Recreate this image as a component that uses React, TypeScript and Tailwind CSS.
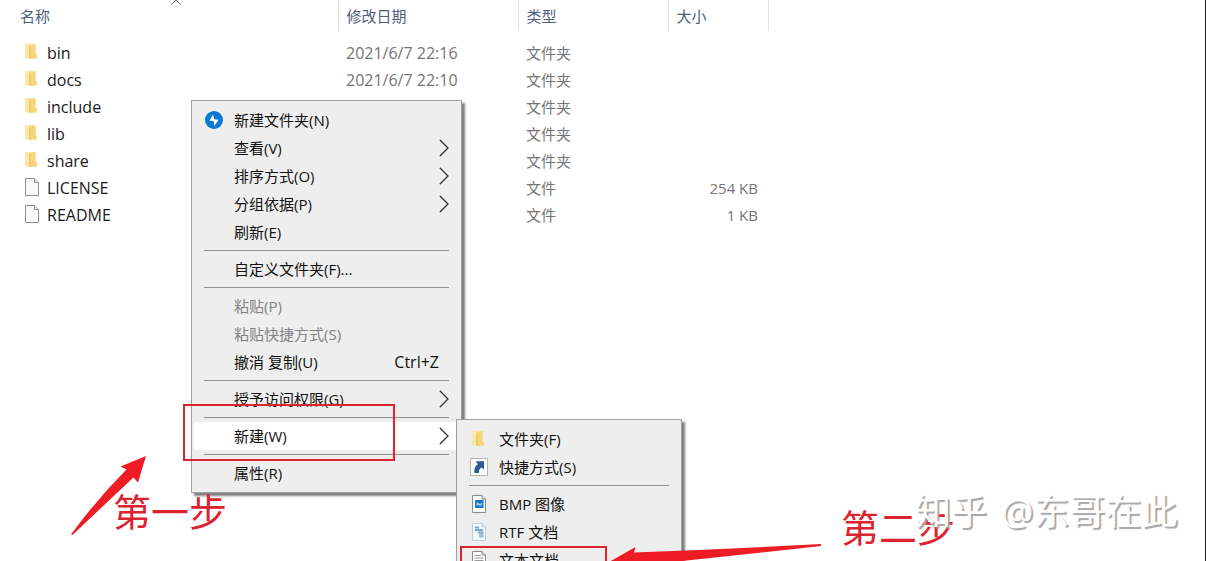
import { Fragment } from "react";
import type { ReactNode } from "react";

// ── Types ───────────────────────────────────────────────────────────────────

interface FileEntry {
  name: string;
  kind: "folder" | "file";
  date?: string;
  size?: string;
}

interface MenuItem {
  label: string;
  icon?: ReactNode;
  shortcut?: string;
  submenu?: boolean;
  disabled?: boolean;
  active?: boolean;
}

// ── Icons ───────────────────────────────────────────────────────────────────

function FolderIcon() {
  return (
    <svg width="16" height="20" viewBox="0 0 16 20" className="shrink-0">
      <path d="M1 2h10.500v14H1z" fill="#fbe29a" />
      <path d="M1 2h4v15l-4-1.500z" fill="#fce7a8" />
      <path d="M5 4l6.500-2v9.500l1.500 1.500v3.500L5 17z" fill="#f6d67c" />
      <path d="M5 4l1.500-.5v13L5 17z" fill="#efc864" />
    </svg>
  );
}

function FileIcon() {
  return (
    <svg width="16" height="20" viewBox="0 0 16 20" className="shrink-0">
      <path d="M1.500 1.500h9L14.500 5.500v13h-13z" fill="#fafafa" stroke="#8e8e8e" />
      <path d="M10.500 1.500v4h4" fill="#e8e8e8" stroke="#8e8e8e" />
    </svg>
  );
}

function FlashIcon() {
  return (
    <svg width="18" height="18" viewBox="0 0 18 18">
      <circle cx="9" cy="9" r="9" fill="#0b78d4" />
      <path d="M8 3.500L4.500 9.800l4 .2.900 5L13.500 8.700l-4.200-.4z" fill="#fff" />
    </svg>
  );
}

function ShortcutIcon() {
  return (
    <svg width="18" height="18" viewBox="0 0 18 18">
      <path d="M.5.5h17v17H.5z" fill="#fff" stroke="#b4b4b4" />
      <path d="M5.500 3.500L14 3v8.500l-2.300-2C9.500 10.800 8.700 12.500 9 15H4.500C3.800 11 5 8.200 7.800 6z" fill="#2c5a94" />
    </svg>
  );
}

function BitmapIcon() {
  return (
    <svg width="16" height="20" viewBox="0 0 16 20">
      <path d="M1.500 1.500H11L14.500 5v13.500h-13z" fill="#fff" stroke="#8a8a8a" />
      <path d="M11 1.500V5h3.500" fill="#ddd" stroke="#8a8a8a" />
      <path d="M4 6h8.500v8H4z" fill="#1478cc" />
      <path d="M5.500 8l2 1 1.500 1 2-1.500v3H5.500z" fill="#8fd0f5" />
    </svg>
  );
}

function RichTextIcon() {
  return (
    <svg width="16" height="20" viewBox="0 0 16 20">
      <path d="M1.500 1.500H11L14.500 5v13.500h-13z" fill="#f3f8fc" stroke="#c3cdd6" />
      <path d="M11 1.500V5h3.500" fill="#dde6ee" stroke="#c3cdd6" />
      <path d="M4 5.500h4M4 8h8M7 10.500h5.500" stroke="#7fa6c9" strokeWidth="2" />
      <path d="M8 11h4.500v4.500H8z" fill="#9dbedb" />
    </svg>
  );
}

function TextIcon() {
  return (
    <svg width="16" height="20" viewBox="0 0 16 20">
      <path d="M1.500 1.500H11L14.500 5v13.500h-13z" fill="#fff" stroke="#8a8a8a" />
      <path d="M11 1.500V5h3.500" fill="#ddd" stroke="#8a8a8a" />
      <path d="M3.500 5.500H10M3.500 8h9M3.500 10.500h9M3.500 13h9M3.500 15.500h9" stroke="#9a9a9a" />
    </svg>
  );
}

function Chevron() {
  return (
    <svg width="10" height="18" viewBox="0 0 10 18" className="shrink-0">
      <path d="M.8.8L9 9 .8 17.200" fill="none" stroke="#333" strokeWidth="1.300" />
    </svg>
  );
}

// ── Data ────────────────────────────────────────────────────────────────────

const files: FileEntry[] = [
  { name: "bin", kind: "folder", date: "2021/6/7 22:16" },
  { name: "docs", kind: "folder", date: "2021/6/7 22:10" },
  { name: "include", kind: "folder" },
  { name: "lib", kind: "folder" },
  { name: "share", kind: "folder" },
  { name: "LICENSE", kind: "file", size: "254 KB" },
  { name: "README", kind: "file", size: "1 KB" },
];

// each inner array is one block between separators
const contextMenu: MenuItem[][] = [
  [
    { label: "新建文件夹(N)", icon: <FlashIcon /> },
    { label: "查看(V)", submenu: true },
    { label: "排序方式(O)", submenu: true },
    { label: "分组依据(P)", submenu: true },
    { label: "刷新(E)" },
  ],
  [{ label: "自定义文件夹(F)..." }],
  [
    { label: "粘贴(P)", disabled: true },
    { label: "粘贴快捷方式(S)", disabled: true },
    { label: "撤消 复制(U)", shortcut: "Ctrl+Z" },
  ],
  [{ label: "授予访问权限(G)", submenu: true }],
  [{ label: "新建(W)", submenu: true, active: true }],
  [{ label: "属性(R)" }],
];

const newMenu: MenuItem[][] = [
  [
    { label: "文件夹(F)", icon: <FolderIcon /> },
    { label: "快捷方式(S)", icon: <ShortcutIcon /> },
  ],
  [
    { label: "BMP 图像", icon: <BitmapIcon /> },
    { label: "RTF 文档", icon: <RichTextIcon /> },
    { label: "文本文档", icon: <TextIcon /> },
  ],
];

// ── Menu ────────────────────────────────────────────────────────────────────

function Menu({ groups, className }: { groups: MenuItem[][]; className: string }) {
  return (
    <div
      role="menu"
      className={`absolute border border-[#a0a0a0] bg-[#eeeeee] py-[5px] shadow-[3px_3px_2px_rgba(0,0,0,0.5)] ${className}`}
    >
      {groups.map((items, i) => (
        <Fragment key={i}>
          {i > 0 && <div role="separator" className="mx-3 my-1 h-px bg-[#919191]" />}
          {items.map((item) => (
            <button
              key={item.label}
              role="menuitem"
              disabled={item.disabled}
              className={`flex h-7 w-full items-center border-x-2 border-[#eeeeee] pr-2.5 text-left ${
                item.active ? "bg-white" : ""
              } ${item.disabled ? "text-[#838383]" : "text-[#111111]"}`}
            >
              <span className="flex w-10 shrink-0 justify-center">{item.icon}</span>
              <span className="flex-1">{item.label}</span>
              {item.shortcut && <span className="pr-2.5 text-base">{item.shortcut}</span>}
              {item.submenu && <Chevron />}
            </button>
          ))}
        </Fragment>
      ))}
    </div>
  );
}

// ── Page ────────────────────────────────────────────────────────────────────

export default function App() {
  return (
    <main className="relative h-screen overflow-hidden border-r border-[#222222] bg-white font-['Open_Sans','Noto_Sans_CJK_SC',sans-serif] text-[15px] leading-5 text-[#1a1a1a]">
      <table className="table-fixed border-collapse">
        <colgroup>
          <col className="w-[338px]" />
          <col className="w-[180px]" />
          <col className="w-[150px]" />
          <col className="w-[100px]" />
        </colgroup>
        <thead>
          <tr className="h-[31px] text-left text-[#4c607a] *:border-r *:border-[#e2e2e2] *:p-0 *:font-normal">
            <th className="relative">
              <span className="pl-5">名称</span>
              <svg width="12" height="7" viewBox="0 0 12 7" className="absolute top-0 left-[170px]">
                <path d="M1 5l5-5 5 5" fill="none" stroke="#6b6b6b" />
              </svg>
            </th>
            <th>
              <span className="pl-2">修改日期</span>
            </th>
            <th>
              <span className="pl-2">类型</span>
            </th>
            <th>
              <span className="pl-2">大小</span>
            </th>
          </tr>
        </thead>
        <tbody className="before:block before:h-2">
          {files.map((file) => (
            <tr key={file.name} className="h-[27px] text-[#757575] *:p-0">
              <td>
                <span className="flex items-center gap-[7px] pl-6 text-base leading-5 text-[#1a1a1a]">
                  <span className="flex w-4 pb-0.5">{file.kind === "folder" ? <FolderIcon /> : <FileIcon />}</span>
                  {file.name}
                </span>
              </td>
              <td>
                <span className="pl-2 text-base leading-5">{file.date}</span>
              </td>
              <td>
                <span className="pl-2">{file.kind === "folder" ? "文件夹" : "文件"}</span>
              </td>
              <td className="text-right">
                <span className="pr-2.5">{file.size}</span>
              </td>
            </tr>
          ))}
        </tbody>
      </table>

      <Menu groups={contextMenu} className="top-[100px] left-[191px] w-[271px]" />
      <Menu groups={newMenu} className="top-[419px] left-[456px] w-[226px]" />

      {/* Annotations */}
      <div className="pointer-events-none absolute top-[404px] left-[183px] h-[57px] w-[212px] border-2 border-[#d9252f]" />
      <div className="pointer-events-none absolute top-[546px] left-[460px] h-8 w-[147px] border-2 border-[#d9252f]" />
      <svg width="76" height="80" viewBox="0 0 76 80" className="pointer-events-none absolute top-[456px] left-[71px]">
        <path d="M75 0L49.500 10.500 55.500 13.500Q26 43 0 78.500L1.500 79Q32 50 62.500 21.500L67 26.500z" fill="#ee1c25" />
      </svg>
      <svg width="212" height="28" viewBox="0 0 212 28" className="pointer-events-none absolute top-[544px] left-[609px]">
        <path d="M0 18L26.500 3 25 8.500Q120 5 212 0V2Q140 10 73 17L25 23 29 28z" fill="#ee1c25" />
      </svg>
      <p className="absolute top-[487px] left-[113px] text-[38px] leading-12 text-[#dc2430]">第一步</p>
      <p className="absolute top-[503px] left-[841px] text-[38px] leading-12 text-[#dc2430]">第二步</p>

      {/* Watermark */}
      <p className="absolute top-[488px] left-[915px] flex gap-3.5 text-[36px] leading-12 whitespace-nowrap text-white [text-shadow:2px_2px_1px_#a6a6a6]">
        <span>知乎</span>
        <span>@东哥在此</span>
      </p>
    </main>
  );
}
